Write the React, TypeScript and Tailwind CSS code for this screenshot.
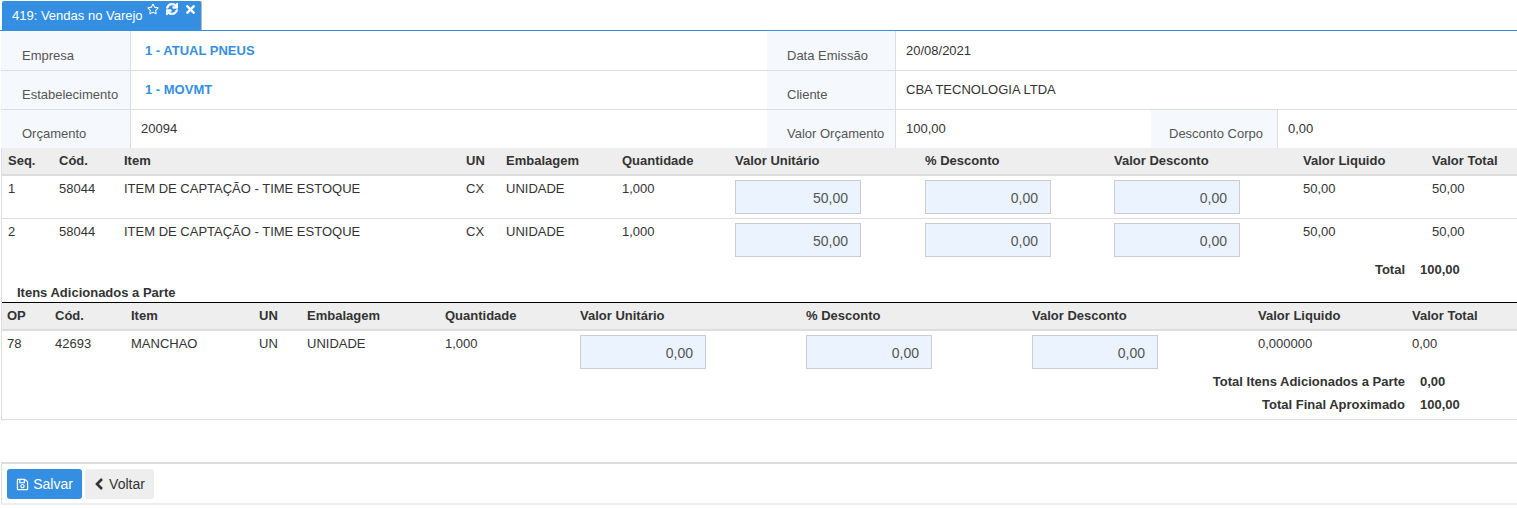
import React from "react";
import { FaRegStar, FaSync, FaTimes, FaRegSave } from "react-icons/fa";

const itens = [
  { seq: "1", cod: "58044", item: "ITEM DE CAPTAÇÃO - TIME ESTOQUE", un: "CX", emb: "UNIDADE", qtd: "1,000", vu: "50,00", pd: "0,00", vd: "0,00", vl: "50,00", vt: "50,00" },
  { seq: "2", cod: "58044", item: "ITEM DE CAPTAÇÃO - TIME ESTOQUE", un: "CX", emb: "UNIDADE", qtd: "1,000", vu: "50,00", pd: "0,00", vd: "0,00", vl: "50,00", vt: "50,00" },
];
const adicionados = [
  { seq: "78", cod: "42693", item: "MANCHAO", un: "UN", emb: "UNIDADE", qtd: "1,000", vu: "0,00", pd: "0,00", vd: "0,00", vl: "0,000000", vt: "0,00" },
];

function Label({ children, first, className = "" }: { children: React.ReactNode; first?: boolean; className?: string }) {
  return <div className={`bg-[#f5f8fc] border-r border-[#ddd] text-[#555] shrink-0 ${first ? "pt-[18px]" : "pt-[17px]"} ${className}`}>{children}</div>;
}

function Value({ children, link, first, className = "" }: { children: React.ReactNode; link?: boolean; first?: boolean; className?: string }) {
  return (
    <div className={`${first ? "pt-[13px]" : "pt-[12px]"} ${link ? "pl-[14px] font-bold text-[#348fe2]" : "pl-[10px] text-[#333]"} ${className}`}>
      {children}
    </div>
  );
}

function Campo({ value }: { value: string }) {
  return (
    <div className="w-[126px] h-[34px] bg-[#ebf4fe] border border-[#ccc] text-right pr-[12px] pt-[9px] text-[14px] leading-[16px] text-[#555]">
      {value}
    </div>
  );
}

function Tabela({ cols, head, rows, pad }: { cols: number[]; head: string[]; rows: typeof itens; pad: string }) {
  return (
    <table className="table-fixed w-full border-collapse">
      <colgroup>
        {cols.map((c, i) => <col key={i} style={{ width: c }} />)}
      </colgroup>
      <thead>
        <tr className="bg-[#eee] border-b-2 border-[#ddd] h-[27px]">
          {head.map((h, i) => (
            <th key={h} className={`text-left font-bold pr-[7px] text-[#333] ${i === 0 ? pad : "pl-[7px]"}`}>{h}</th>
          ))}
        </tr>
      </thead>
      <tbody>
        {rows.map((r, i) => (
          <tr key={i} className="h-[43px] align-top text-[#333] border-b border-[#ddd] last:border-b-0">
            <td className={`pr-[7px] pt-[6px] ${pad}`}>{r.seq}</td>
            <td className="px-[7px] pt-[6px]">{r.cod}</td>
            <td className="px-[7px] pt-[6px]">{r.item}</td>
            <td className="px-[7px] pt-[6px]">{r.un}</td>
            <td className="px-[7px] pt-[6px]">{r.emb}</td>
            <td className="px-[7px] pt-[6px]">{r.qtd}</td>
            <td className="px-[7px] pt-[4px] pb-[4px]"><Campo value={r.vu} /></td>
            <td className="px-[7px] pt-[4px] pb-[4px]"><Campo value={r.pd} /></td>
            <td className="px-[7px] pt-[4px] pb-[4px]"><Campo value={r.vd} /></td>
            <td className="px-[7px] pt-[6px]">{r.vl}</td>
            <td className="px-[7px] pt-[6px]">{r.vt}</td>
          </tr>
        ))}
      </tbody>
    </table>
  );
}

function Total({ label, value, className = "" }: { label: string; value: string; className?: string }) {
  return (
    <div className={`flex font-bold text-[#333] leading-[14px] ${className}`}>
      <div className="w-[1403px] text-right">{label}</div>
      <div className="pl-[15px]">{value}</div>
    </div>
  );
}

export default function App() {
  return (
    <div className="w-[1517px] h-[508px] bg-white overflow-hidden text-[13px] leading-[14px] font-['Liberation_Sans',Arial,sans-serif]">
      <div className="h-[31px] pt-[1px] pl-[2px] border-b border-[#348fe2]">
        <div className="w-[200px] h-[29px] bg-[#348fe2] rounded-t-[2px] border-r border-[#bbb] text-white flex items-start pl-[10px] relative">
          <span className="mt-[8px]">419: Vendas no Varejo</span>
          <FaRegStar className="absolute left-[145px] top-[2px] text-[12px]" />
          <FaSync className="absolute left-[164px] top-[2px] text-[12px]" stroke="currentColor" strokeWidth={30} />
          <FaTimes className="absolute left-[182px] top-[2px] text-[13px]" />
        </div>
      </div>

      <div className="ml-[1px]">
        <div className="flex h-[40px] border-b border-[#ddd]">
          <Label first className="w-[130px] pl-[21px]">Empresa</Label>
          <Value first link className="w-[636px]">1 - ATUAL PNEUS</Value>
          <Label first className="w-[129px] pl-[20px]">Data Emissão</Label>
          <Value first>20/08/2021</Value>
        </div>
        <div className="flex h-[39px] border-b border-[#ddd]">
          <Label className="w-[130px] pl-[21px]">Estabelecimento</Label>
          <Value link className="w-[636px]">1 - MOVMT</Value>
          <Label className="w-[129px] pl-[20px]">Cliente</Label>
          <Value>CBA TECNOLOGIA LTDA</Value>
        </div>
        <div className="flex h-[38px]">
          <Label className="w-[130px] pl-[21px]">Orçamento</Label>
          <Value className="w-[636px]">20094</Value>
          <Label className="w-[129px] pl-[20px]">Valor Orçamento</Label>
          <Value className="w-[255px]">100,00</Value>
          <Label className="w-[127px] pl-[18px]">Desconto Corpo</Label>
          <Value>0,00</Value>
        </div>
      </div>

      <div className="ml-[1px] border-l border-b border-[#ddd] h-[272px]">
        <Tabela
          pad="pl-[6px]"
          cols={[50, 65, 342, 40, 116, 113, 190, 189, 189, 129, 92]}
          head={["Seq.", "Cód.", "Item", "UN", "Embalagem", "Quantidade", "Valor Unitário", "% Desconto", "Valor Desconto", "Valor Liquido", "Valor Total"]}
          rows={itens}
        />
        <Total label="Total" value="100,00" className="mt-[1px]" />
        <div className="mt-[9px] pl-[15px] h-[17px] font-bold text-[#333] border-b border-black w-[1515px]">Itens Adicionados a Parte</div>
        <Tabela
          pad="pl-[5px]"
          cols={[46, 76, 128, 48, 138, 135, 226, 226, 226, 154, 112]}
          head={["OP", "Cód.", "Item", "UN", "Embalagem", "Quantidade", "Valor Unitário", "% Desconto", "Valor Desconto", "Valor Liquido", "Valor Total"]}
          rows={adicionados}
        />
        <Total label="Total Itens Adicionados a Parte" value="0,00" className="mt-[2px]" />
        <Total label="Total Final Aproximado" value="100,00" className="mt-[9px]" />
      </div>

      <div className="mt-[42px] ml-[1px] h-[43px] border-y-2 border-t-[#ddd] border-b-[#eee] border-l border-l-[#ddd] flex gap-[3px] pl-[5px] pt-[5px]">
        <button className="w-[75px] h-[30px] bg-[#348fe2] text-white rounded-[3px] text-[14px] flex items-center justify-center gap-[4px]">
          <FaRegSave className="text-[13px]" />
          Salvar
        </button>
        <button className="w-[69px] h-[30px] bg-[#eee] text-[#333] rounded-[3px] text-[14px] flex items-center justify-center gap-[5px]">
          <svg width="10" height="12" viewBox="0 0 10 12" fill="none" stroke="currentColor" strokeWidth="2.6">
            <polyline points="8,1 3,6 8,11" />
          </svg>
          Voltar
        </button>
      </div>
    </div>
  );
}
